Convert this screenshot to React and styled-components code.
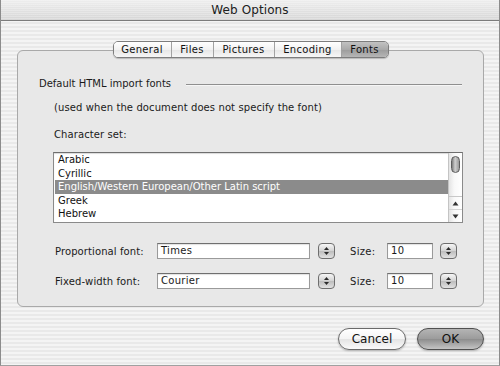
import React from 'react';
import styled, { createGlobalStyle } from 'styled-components';

const GlobalStyle = createGlobalStyle`
  html, body {
    margin: 0;
    padding: 0;
    background: #ffffff;
  }
  body {
    font-family: "DejaVu Sans", "Liberation Sans", sans-serif;
    font-size: 10px;
    color: #1a1a1a;
  }
`;

const tabs = ['General', 'Files', 'Pictures', 'Encoding', 'Fonts'];
const charsets = ['Arabic', 'Cyrillic', 'English/Western European/Other Latin script', 'Greek', 'Hebrew'];

const pinstripe = `repeating-linear-gradient(to bottom, #f4f4f4 0px, #f4f4f4 2px, #e9e9e9 2px, #e9e9e9 4px)`;

const Window = styled.div`
  width: 500px;
  height: 366px;
  box-sizing: border-box;
  border-left: 1px solid #8c8c8c;
  border-right: 1px solid #8c8c8c;
  border-bottom: 1px solid #a0a0a0;
  background: ${pinstripe};
  display: flex;
  flex-direction: column;
`;

const TitleBar = styled.div`
  height: 20px;
  border-bottom: 1px solid #7c7c7c;
  background:
    repeating-linear-gradient(to bottom, rgba(255,255,255,0.25) 0 1px, rgba(0,0,0,0) 1px 2px),
    linear-gradient(to bottom, #eeeeee, #d6d6d6);
  display: flex;
  align-items: center;
  justify-content: center;
  font-size: 12px;
  color: #202020;
  letter-spacing: 0.1px;
`;

const Body = styled.div`
  display: flex;
  flex-direction: column;
  padding: 20px 15px 0 16px;
`;

const TabBar = styled.div`
  display: flex;
  justify-content: center;
  margin-bottom: -8px;
  position: relative;
  z-index: 1;
`;

const Tabs = styled.div`
  display: flex;
  height: 17px;
  box-sizing: border-box;
  border: 1px solid #7d7d7d;
  border-radius: 5px;
  overflow: hidden;
  box-shadow: 0 1px 1px rgba(0,0,0,0.2);
`;

const Tab = styled.div`
  width: ${p => p.$w}px;
  display: flex;
  align-items: center;
  justify-content: center;
  box-sizing: border-box;
  border-left: ${p => (p.$first ? 'none' : '1px solid #a2a2a2')};
  font-size: 10px;
  letter-spacing: 0.3px;
  color: #111;
  background: ${p => (p.$active
    ? 'linear-gradient(to bottom, #c2c2c2 0%, #a9a9a9 50%, #9b9b9b 51%, #b6b6b6 100%)'
    : 'linear-gradient(to bottom, #ffffff 0%, #f2f2f2 50%, #e6e6e6 51%, #f6f6f6 100%)')};
`;

const GroupBox = styled.div`
  height: 257px;
  box-sizing: border-box;
  border: 1px solid #a9a9a9;
  border-radius: 6px;
  background: #e8e8e8;
  display: flex;
  flex-direction: column;
  padding-top: 26px;
`;

const SectionHeader = styled.div`
  display: flex;
  align-items: center;
  height: 13px;
  margin: 0 21px 0 21px;
`;

const HeaderRule = styled.div`
  flex: 1;
  margin-left: 15px;
  margin-top: 3px;
  border-top: 1px solid #8f8f8f;
  border-bottom: 1px solid #f6f6f6;
`;

const Label = styled.div`
  height: 13px;
  line-height: 13px;
  margin-left: ${p => p.$left}px;
  margin-top: ${p => p.$top}px;
  letter-spacing: 0.1px;
`;

const ListBox = styled.div`
  margin: 11px 0 0 35px;
  width: 410px;
  height: 71px;
  box-sizing: border-box;
  border: 1px solid #8a8a8a;
  border-top-color: #6e6e6e;
  background: #ffffff;
  display: flex;
  box-shadow: inset 0 1px 1px rgba(0,0,0,0.15);
`;

const Items = styled.div`
  flex: 1;
  padding-left: 1px;
  display: flex;
  flex-direction: column;
`;

const Item = styled.div`
  height: 13.5px;
  line-height: 13.5px;
  padding-left: 3px;
  color: ${p => (p.$selected ? '#ffffff' : '#111')};
  background: ${p => (p.$selected ? '#8b8b8b' : 'transparent')};
  white-space: nowrap;
`;

const ScrollBar = styled.div`
  width: 14px;
  box-sizing: border-box;
  border-left: 1px solid #c4c4c4;
  background: linear-gradient(to right, #e4e4e4, #f8f8f8 40%, #ffffff);
  display: flex;
  flex-direction: column;
  align-items: center;
`;

const Thumb = styled.div`
  width: 9px;
  height: 17px;
  margin-top: 3px;
  box-sizing: border-box;
  border: 1px solid #5e5e5e;
  border-radius: 5px;
  background: linear-gradient(to right, #7c7c7c, #cfcfcf 45%, #9a9a9a);
`;

const Arrows = styled.div`
  margin-top: auto;
  width: 100%;
  display: flex;
  flex-direction: column;
  border-top: 1px solid #c8c8c8;
`;

const ArrowCell = styled.div`
  height: 12px;
  display: flex;
  align-items: center;
  justify-content: center;
  border-top: ${p => (p.$divided ? '1px solid #d4d4d4' : 'none')};
`;

const FontRow = styled.div`
  display: flex;
  align-items: center;
  height: 16px;
  margin: ${p => p.$top}px 0 0 37px;
`;

const RowLabel = styled.div`
  width: 102px;
  letter-spacing: 0.1px;
`;

const TextInput = styled.div`
  width: ${p => p.$w}px;
  height: 16px;
  box-sizing: border-box;
  border: 1px solid #9a9a9a;
  border-top-color: #6f6f6f;
  background: #ffffff;
  box-shadow: inset 0 1px 1px rgba(0,0,0,0.12);
  padding-left: 3px;
  line-height: 14px;
  letter-spacing: 0.3px;
`;

const Stepper = styled.div`
  width: 17px;
  height: 16px;
  margin-left: ${p => p.$left}px;
  box-sizing: border-box;
  border: 1px solid #6d6d6d;
  border-radius: 4px;
  background: linear-gradient(to bottom, #f6f6f6, #d2d2d2 50%, #bcbcbc 51%, #e2e2e2);
  display: flex;
  align-items: center;
  justify-content: center;
`;

const SizeLabel = styled.div`
  width: 37px;
  margin-left: 15px;
  letter-spacing: 0.3px;
`;

const ButtonRow = styled.div`
  display: flex;
  justify-content: flex-end;
  gap: 11px;
  margin-top: 21px;
`;

const PushButton = styled.div`
  width: ${p => p.$w}px;
  height: 22px;
  box-sizing: border-box;
  border: 1px solid ${p => (p.$default ? '#4f4f4f' : '#6a6a6a')};
  border-radius: 11px;
  display: flex;
  align-items: center;
  justify-content: center;
  font-size: 12px;
  color: #111;
  box-shadow: 0 1px 2px rgba(0,0,0,0.25);
  background: ${p => (p.$default
    ? 'linear-gradient(to bottom, #b4b4b4 0%, #9b9b9b 50%, #8d8d8d 51%, #c4c4c4 100%)'
    : 'linear-gradient(to bottom, #ffffff 0%, #f4f4f4 50%, #e4e4e4 51%, #fafafa 100%)')};
`;

function StepperIcon() {
  return (
    <svg width="7" height="10" viewBox="0 0 7 10">
      <path d="M3.5 1 L6 4 H1 Z" fill="#2a2a2a" />
      <path d="M3.5 9 L6 6 H1 Z" fill="#2a2a2a" />
    </svg>
  );
}

function Arrow({ down }) {
  return (
    <svg width="7" height="5" viewBox="0 0 7 5">
      <path d={down ? 'M0.5 0.5 H6.5 L3.5 4.5 Z' : 'M3.5 0.5 L6.5 4.5 H0.5 Z'} fill="#333" />
    </svg>
  );
}

function FontField({ top, label, value }) {
  return (
    <FontRow $top={top}>
      <RowLabel>{label}</RowLabel>
      <TextInput $w={153}>{value}</TextInput>
      <Stepper $left={8}><StepperIcon /></Stepper>
      <SizeLabel>Size:</SizeLabel>
      <TextInput $w={46}>10</TextInput>
      <Stepper $left={7}><StepperIcon /></Stepper>
    </FontRow>
  );
}

export default function App() {
  const widths = [57, 42, 61, 67, 47];
  return (
    <>
      <GlobalStyle />
      <Window>
        <TitleBar>Web Options</TitleBar>
        <Body>
          <TabBar>
            <Tabs>
              {tabs.map((t, i) => (
                <Tab key={t} $w={widths[i]} $first={i === 0} $active={t === 'Fonts'}>{t}</Tab>
              ))}
            </Tabs>
          </TabBar>
          <GroupBox>
            <SectionHeader>
              Default HTML import fonts
              <HeaderRule />
            </SectionHeader>
            <Label $left={36} $top={11}>(used when the document does not specify the font)</Label>
            <Label $left={36} $top={14}>Character set:</Label>
            <ListBox>
              <Items>
                {charsets.map((c, i) => (
                  <Item key={c} $selected={i === 2}>{c}</Item>
                ))}
              </Items>
              <ScrollBar>
                <Thumb />
                <Arrows>
                  <ArrowCell><Arrow /></ArrowCell>
                  <ArrowCell $divided><Arrow down /></ArrowCell>
                </Arrows>
              </ScrollBar>
            </ListBox>
            <FontField top={20} label="Proportional font:" value="Times" />
            <FontField top={14} label="Fixed-width font:" value="Courier" />
          </GroupBox>
          <ButtonRow>
            <PushButton $w={68}>Cancel</PushButton>
            <PushButton $w={67} $default>OK</PushButton>
          </ButtonRow>
        </Body>
      </Window>
    </>
  );
}
